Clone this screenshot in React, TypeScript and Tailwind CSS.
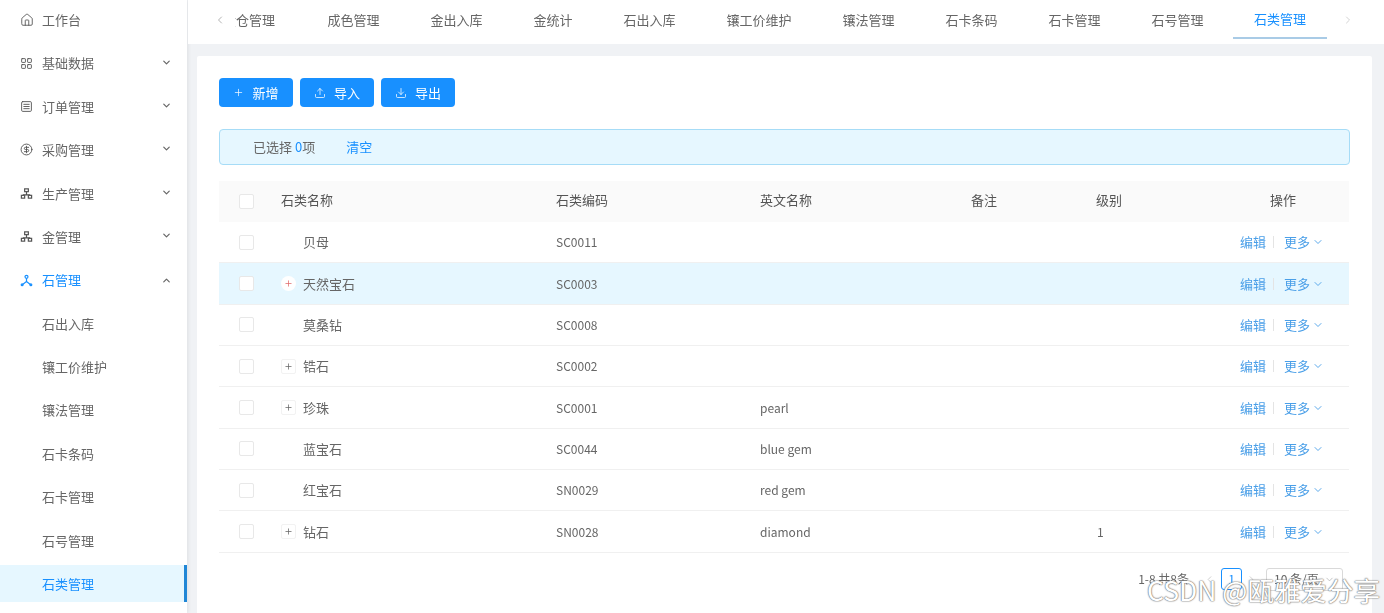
import {ChevronDown, ChevronLeft, ChevronRight, ChevronUp, CircleDollarSign, Download, House, LayoutGrid, Plus, SquareMenu, Upload} from "lucide-react";

const font = {fontFamily: '"Noto Sans CJK SC", "Liberation Sans", sans-serif'}

const Cluster = ({className}: { className?: string }) => (
    <svg className={className} viewBox="0 0 14 14" fill="none" stroke="currentColor" strokeWidth="1.3">
        <rect x="5" y="2" width="4" height="3"/>
        <path d="M7 5v3M3 8.5h8"/>
        <rect x="1.5" y="9" width="3.5" height="3"/>
        <rect x="9" y="9" width="3.5" height="3"/>
    </svg>
)

const StoneIcon = ({className}: { className?: string }) => (
    <svg className={className} viewBox="0 0 14 14" fill="none" stroke="currentColor" strokeWidth="1.3">
        <circle cx="7" cy="3" r="1.6"/>
        <path d="M7 4.6v3.4L2.5 11.5M7 8l4.5 3.5"/>
        <circle cx="2.3" cy="11.6" r="1"/>
        <circle cx="11.7" cy="11.6" r="1"/>
    </svg>
)

const menus = [
    {name: "工作台", icon: <House className="w-[14px] h-[14px]" strokeWidth={1.5}/>},
    {name: "基础数据", icon: <LayoutGrid className="w-[13px] h-[13px]" strokeWidth={1.7}/>, arrow: true},
    {name: "订单管理", icon: <SquareMenu className="w-[13px] h-[13px]" strokeWidth={1.7}/>, arrow: true},
    {name: "采购管理", icon: <CircleDollarSign className="w-[13px] h-[13px]" strokeWidth={1.7}/>, arrow: true},
    {name: "生产管理", icon: <Cluster className="w-[13px] h-[13px]"/>, arrow: true},
    {name: "金管理", icon: <Cluster className="w-[13px] h-[13px]"/>, arrow: true},
]

const subMenus = ["石出入库", "镶工价维护", "镶法管理", "石卡条码", "石卡管理", "石号管理"]

const tabs = [
    {name: "金仓管理", w: "w-[112px] justify-end pr-[27px]"},
    {name: "成色管理", w: "w-[103px] justify-center"},
    {name: "金出入库", w: "w-[103px] justify-center"},
    {name: "金统计", w: "w-[90px] justify-center"},
    {name: "石出入库", w: "w-[103px] justify-center"},
    {name: "镶工价维护", w: "w-[116px] justify-center"},
    {name: "镶法管理", w: "w-[103px] justify-center"},
    {name: "石卡条码", w: "w-[103px] justify-center"},
    {name: "石卡管理", w: "w-[103px] justify-center"},
    {name: "石号管理", w: "w-[103px] justify-center"},
]

const rows = [
    {name: "贝母", code: "SC0011", en: "", level: "", expand: false},
    {name: "天然宝石", code: "SC0003", en: "", level: "", expand: true, active: true},
    {name: "莫桑钻", code: "SC0008", en: "", level: "", expand: false},
    {name: "锆石", code: "SC0002", en: "", level: "", expand: true},
    {name: "珍珠", code: "SC0001", en: "pearl", level: "", expand: true},
    {name: "蓝宝石", code: "SC0044", en: "blue gem", level: "", expand: false},
    {name: "红宝石", code: "SN0029", en: "red gem", level: "", expand: false},
    {name: "钻石", code: "SN0028", en: "diamond", level: "1", expand: true},
]

const gridCols = "grid grid-cols-[62px_275px_204px_211px_125px_144px_109px] items-center"

const Checkbox = () => (
    <div className="ml-[20px] w-[15px] h-[15px] bg-white border border-[#e8e8e8] rounded-[2px]"/>
)

export default function App() {
    return (
        <div className="relative w-[1384px] h-[613px] overflow-hidden" style={font}>
            <div className="flex w-full h-full bg-[#f0f2f5] text-[13px] text-[#666666] blur-[0.4px]">
                <div className="w-[187px] shrink-0 bg-white shadow-[1px_0_4px_rgba(0,0,0,0.08)]">
                    <div className="-mt-[2px]">
                        {menus.map((m) => (
                            <div className="flex items-center h-[43.4px] pl-[20px] pr-[15px]" key={m.name}>
                                <span className="w-[22px] flex text-[#555555]">{m.icon}</span>
                                <span className="flex-1">{m.name}</span>
                                {m.arrow && <ChevronDown className="w-[11px] h-[11px] -mt-[2px] text-[#666666]" strokeWidth={2.6}/>}
                            </div>
                        ))}
                        <div className="flex items-center h-[43.4px] pl-[20px] pr-[15px] text-[#1890ff]">
                            <span className="w-[22px] flex"><StoneIcon className="w-[13px] h-[13px]"/></span>
                            <span className="flex-1">石管理</span>
                            <ChevronUp className="w-[11px] h-[11px] text-[#666666]" strokeWidth={2.6}/>
                        </div>
                        {subMenus.map((s) => (
                            <div className="flex items-center h-[43.4px] pl-[42px]" key={s}>{s}</div>
                        ))}
                        <div className="flex items-center h-[37px] mt-[3px] pl-[42px] bg-[#e6f7ff] text-[#1890ff] border-r-[3px] border-[#1f86d6]">
                            石类管理
                        </div>
                    </div>
                </div>

                <div className="flex-1 flex flex-col min-w-0">
                    <div className="h-[44px] shrink-0 bg-white flex items-center pl-[26px] pr-[30px] ml-[1px]">
                        <ChevronLeft className="w-[12px] h-[12px] -mt-[4px] text-[#999999] shrink-0" strokeWidth={1.5}/>
                        <div className="flex-1 flex items-start justify-end overflow-hidden h-full min-w-0 ml-[9px]">
                            {tabs.map((t) => (
                                <div className={`${t.w} h-[39px] shrink-0 flex items-center`} key={t.name}>{t.name}</div>
                            ))}
                            <div className="w-[94px] h-[39px] shrink-0 flex items-center justify-center text-[#1890ff] border-b-2 border-[#a9cbe6] ml-[4px]">
                                石类管理
                            </div>
                        </div>
                        <ChevronRight className="w-[12px] h-[12px] -mt-[4px] text-[#c4c4c4] shrink-0 ml-[15px]" strokeWidth={1.5}/>
                    </div>

                    <div className="flex-1 mt-[12px] ml-[10px] mr-[12px] bg-white rounded-t-[2px] px-[22px] pt-[22px]">
                        <div className="flex gap-[7px]">
                            <button className="w-[74px] h-[29px] bg-[#1890ff] text-white rounded-[4px] flex items-center justify-center gap-[8px]">
                                <Plus className="w-[11px] h-[11px]" strokeWidth={1.5}/>新增
                            </button>
                            <button className="w-[74px] h-[29px] bg-[#1890ff] text-white rounded-[4px] flex items-center justify-center gap-[8px]">
                                <Upload className="w-[12px] h-[12px]" strokeWidth={1.5}/>导入
                            </button>
                            <button className="w-[74px] h-[29px] bg-[#1890ff] text-white rounded-[4px] flex items-center justify-center gap-[8px]">
                                <Download className="w-[12px] h-[12px]" strokeWidth={1.5}/>导出
                            </button>
                        </div>

                        <div className="w-[1131px] h-[36px] mt-[22px] flex items-center pl-[33px] bg-[#e6f7ff] border border-[#a6dcf7] rounded-[4px]">
                            <span>已选择 <span className="text-[#1890ff]">0</span>项</span>
                            <span className="ml-[31px] text-[#1890ff]">清空</span>
                        </div>

                        <div className="w-[1130px] mt-[16px]">
                            <div className={`${gridCols} h-[41px] bg-[#fafafa] text-[#555555]`}>
                                <Checkbox/>
                                <div className="-mt-[3px]">石类名称</div>
                                <div className="-mt-[3px]">石类编码</div>
                                <div className="-mt-[3px]">英文名称</div>
                                <div className="-mt-[3px]">备注</div>
                                <div className="-mt-[3px]">级别</div>
                                <div className="-mt-[3px] pl-[30px]">操作</div>
                            </div>
                            {rows.map((r) => (
                                <div className={`${gridCols} h-[41.35px] border-b border-[#f0f0f0] ${r.active ? "bg-[#e6f7ff]" : ""}`} key={r.code}>
                                    <Checkbox/>
                                    <div className="flex items-center">
                                        <span className="w-[22px] flex">
                                            {r.expand && (
                                                <span className={`w-[15px] h-[15px] flex items-center justify-center ${r.active ? "rounded-full bg-white text-[#e06a6a]" : "rounded-[2px] border border-[#f2f2f2] text-[#666666]"}`}>
                                                    <Plus className="w-[9px] h-[9px]" strokeWidth={2}/>
                                                </span>
                                            )}
                                        </span>
                                        {r.name}
                                    </div>
                                    <div className="text-[12px]">{r.code}</div>
                                    <div className="text-[12px]">{r.en}</div>
                                    <div/>
                                    <div className="text-[12px] pl-[1px]">{r.level}</div>
                                    <div className="flex items-center text-[#4a9fe8]">
                                        <span>编辑</span>
                                        <span className="w-px h-[12px] bg-[#e4e4e4] mx-[7px]"/>
                                        <span className="ml-[3px]">更多</span>
                                        <ChevronDown className="w-[12px] h-[12px] ml-[2px]" strokeWidth={1.8}/>
                                    </div>
                                </div>
                            ))}
                        </div>

                        <div className="w-[1124px] flex items-center justify-end mt-[15px] text-[12px]">
                            <span>1-8 共8条</span>
                            <ChevronLeft className="w-[11px] h-[11px] ml-[15px] text-[#bbbbbb]" strokeWidth={1.5}/>
                            <span className="w-[21px] h-[22px] ml-[6px] flex items-center justify-center border border-[#1890ff] rounded-[3px] text-[#1890ff]">1</span>
                            <ChevronRight className="w-[11px] h-[11px] ml-[4px] text-[#bbbbbb]" strokeWidth={1.5}/>
                            <div className="w-[77px] h-[23px] ml-[9px] flex items-center justify-between px-[7px] border border-[#d9d9d9] rounded-[3px]">
                                10 条/页
                                <ChevronDown className="w-[11px] h-[11px] text-[#aaaaaa]" strokeWidth={1.5}/>
                            </div>
                        </div>
                    </div>
                </div>
            </div>

            <div className="absolute left-[1147px] top-[573px] text-[26.5px] leading-[34px] whitespace-nowrap text-white [text-shadow:0_0_1px_#777777,0_0_1px_#777777,0_0_2px_#888888]">
                CSDN @瓯雅爱分享
            </div>
        </div>
    )
}
